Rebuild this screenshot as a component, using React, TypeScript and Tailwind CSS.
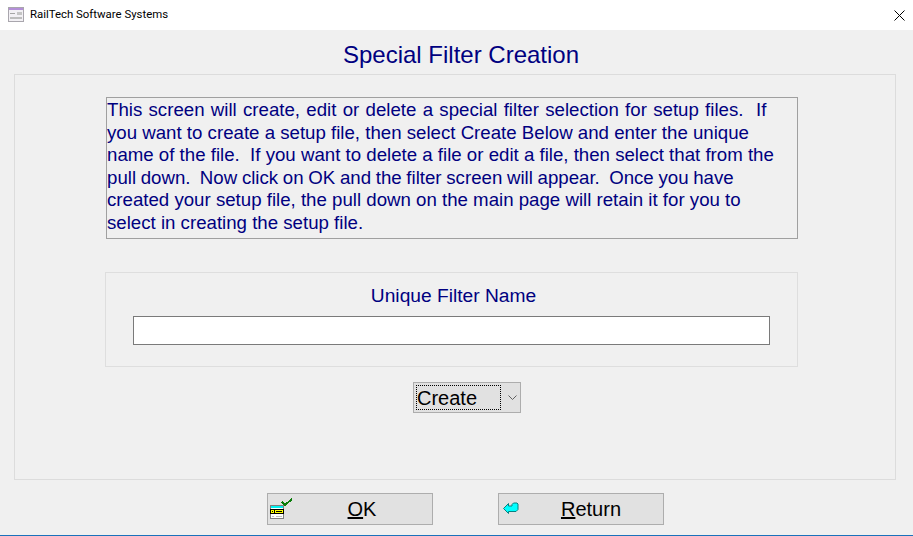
// word spacing per line, the reference text is hinted so the lines don't scale evenly
const lines = [
  { text: 'This screen will create, edit or delete a special filter selection for setup files.  If', cls: '[word-spacing:1.1px]' },
  { text: 'you want to create a setup file, then select Create Below and enter the unique', cls: '' },
  { text: 'name of the file.  If you want to delete a file or edit a file, then select that from the', cls: '' },
  { text: 'pull down.  Now click on OK and the filter screen will appear.  Once you have', cls: '[word-spacing:-0.5px]' },
  { text: 'created your setup file, the pull down on the main page will retain it for you to', cls: '' },
  { text: 'select in creating the setup file.', cls: '' },
]

function AppIcon() {
  return (
    <svg width="16" height="16" viewBox="0 0 16 16" className="shrink-0">
      <rect x="0.5" y="0.5" width="15" height="14" fill="#f2f0f4" stroke="#a9a6ad" />
      <rect x="1" y="1" width="14" height="2" fill="#b48fd8" />
      <rect x="2" y="6" width="5" height="1" fill="#a5a5a5" />
      <rect x="9" y="5" width="5" height="3" fill="#c4c4c4" />
      <rect x="2" y="10" width="12" height="2" fill="#bdbdbd" />
    </svg>
  )
}

function OkIcon() {
  return (
    <svg width="23" height="21" viewBox="0 0 23 21" className="shrink-0" shapeRendering="crispEdges">
      <path d="M12 4l3 3 7-6" fill="none" stroke="#0a7d0a" strokeWidth="2" />
      <rect x="0.5" y="7.5" width="13" height="13" fill="#fff" stroke="#808080" />
      <rect x="1" y="8" width="12" height="2" fill="#00f0f0" />
      <rect x="0" y="11" width="14" height="5" fill="#000" />
      <rect x="1" y="12" width="3" height="3" fill="#ffff00" />
      <rect x="5" y="12" width="8" height="3" fill="#ffff00" />
      <rect x="2" y="13" width="1" height="1" fill="#000" />
      <rect x="6" y="13" width="6" height="1" fill="#000" />
      <rect x="2" y="18" width="2" height="1" fill="#c0c0c0" />
      <rect x="6" y="18" width="6" height="1" fill="#c0c0c0" />
    </svg>
  )
}

function ReturnIcon() {
  return (
    <svg width="16" height="13" viewBox="0 0 16 13" className="shrink-0">
      <path d="M0.5 6.5L5.5 1.5V4H9V2.5L10.5 1H14L15 2V7.5L13 9.5H5.5V11.5Z" fill="#00ffff" stroke="#068080" strokeWidth="1" />
    </svg>
  )
}

export default function App() {
  return (
    <div className="w-[913px] h-[536px] bg-[#f0f0f0] flex flex-col overflow-hidden font-['Liberation_Sans',Arial,sans-serif]">
      <div className="h-[30px] bg-white flex items-center pl-[8px] pr-[8px] shrink-0">
        <AppIcon />
        <span className="ml-[6px] text-[11.4px] text-black font-['Roboto',sans-serif]">RailTech Software Systems</span>
        <svg width="11" height="11" viewBox="0 0 11 11" className="ml-auto" stroke="#000" strokeWidth="1">
          <path d="M0.5 0.5l10 10M10.5 0.5l-10 10" />
        </svg>
      </div>

      <h1 className="h-[44px] pt-[11px] text-center text-[24px] leading-[28px] text-[#000080] pl-[9px] shrink-0">Special Filter Creation</h1>

      <div className="ml-[14px] w-[882px] h-[406px] border border-[#dcdcdc] pt-[22px] pl-[91px] shrink-0">
        <div className="w-[692px] h-[142px] border border-[#a0a0a0] pt-[1px] text-[18.67px] leading-[22.6px] text-[#000080] whitespace-pre">
          {lines.map((line) => (
            <div key={line.text} className={line.cls}>{line.text}</div>
          ))}
        </div>

        <div className="w-[693px] h-[95px] mt-[33px] -ml-[1px] border border-[#dedede] pl-[27px] pt-[12px]">
          <div className="w-[637px] pl-[4px] text-center text-[19.2px] leading-[22px] text-[#000080]">Unique Filter Name</div>
          <div className="w-[637px] h-[29px] mt-[9px] bg-white border border-[#7a7a7a]" />
        </div>

        <div className="w-[108px] h-[31px] mt-[15px] ml-[307px] border border-[#adadad] bg-[#e1e1e1] flex items-center pl-[2px] text-[20px] text-black">
          <span className="w-[85px] h-[25px] border border-dotted border-black flex items-center">Create</span>
          <svg width="9" height="5" viewBox="0 0 9 5" className="ml-[7px]" fill="none" stroke="#606060">
            <path d="M0.5 0.5l4 4 4-4" />
          </svg>
        </div>
      </div>

      <div className="flex pl-[267px] gap-[65px] mt-[13px] shrink-0">
        <button className="relative w-[166px] h-[32px] border border-[#adadad] bg-[#e1e1e1] flex items-center justify-center pl-[24px] text-[20px] text-black">
          <span className="absolute left-[2px] top-[4px]"><OkIcon /></span>
          <span><span className="underline">O</span>K</span>
        </button>
        <button className="relative w-[166px] h-[32px] border border-[#adadad] bg-[#e1e1e1] flex items-center justify-center pl-[20px] text-[20px] text-black">
          <span className="absolute left-[4px] top-[8px]"><ReturnIcon /></span>
          <span><span className="underline">R</span>eturn</span>
        </button>
      </div>

      <div className="mt-auto h-[1px] bg-[#1a72bb] shrink-0" />
    </div>
  )
}
